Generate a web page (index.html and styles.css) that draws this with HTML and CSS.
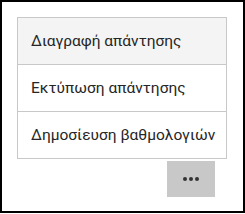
FILE: index.html
```html
<!DOCTYPE html>
<html lang="el">
<head>
    <meta charset="UTF-8">
    <title>Μενού</title>
    <link rel="stylesheet" href="styles.css">
</head>
<body>
    <div class="frame">
        <ul class="menu">
            <li class="menu-item active">Διαγραφή απάντησης</li>
            <li class="menu-item">Εκτύπωση απάντησης</li>
            <li class="menu-item">Δημοσίευση βαθμολογιών</li>
        </ul>
        <div class="more-row">
            <button class="more-button" aria-label="Περισσότερα">
                <span class="dot"></span><span class="dot"></span><span class="dot"></span>
            </button>
        </div>
    </div>
</body>
</html>
```

FILE: styles.css
```css
body {
    margin: 0;
    padding: 0;
    background: #fff;
    font-family: 'Roboto', 'Noto Sans', sans-serif;
}
.frame {
    width: 245px;
    height: 213px;
    box-sizing: border-box;
    border: 2px solid #000;
    padding: 15px 16px 0 15px;
}
.menu {
    list-style: none;
    margin: 0;
    padding: 0;
    border: 1px solid #c8c8c8;
    border-top: none;
}
.menu-item {
    height: 46px;
    border-top: 1px solid #c8c8c8;
    display: flex;
    align-items: center;
    padding-left: 13px;
    font-size: 15.5px;
    color: #262626;
    white-space: nowrap;
}
.menu-item.active {
    background: #f4f4f4;
}
.more-row {
    display: flex;
    justify-content: flex-end;
    padding: 2px 12px 0 0;
}
.more-button {
    width: 48px;
    height: 36px;
    border: none;
    background: #c8c8c8;
    display: flex;
    align-items: center;
    justify-content: center;
    gap: 2px;
    padding: 0;
}
.dot {
    width: 4px;
    height: 4px;
    border-radius: 50%;
    background: #333;
}
```
